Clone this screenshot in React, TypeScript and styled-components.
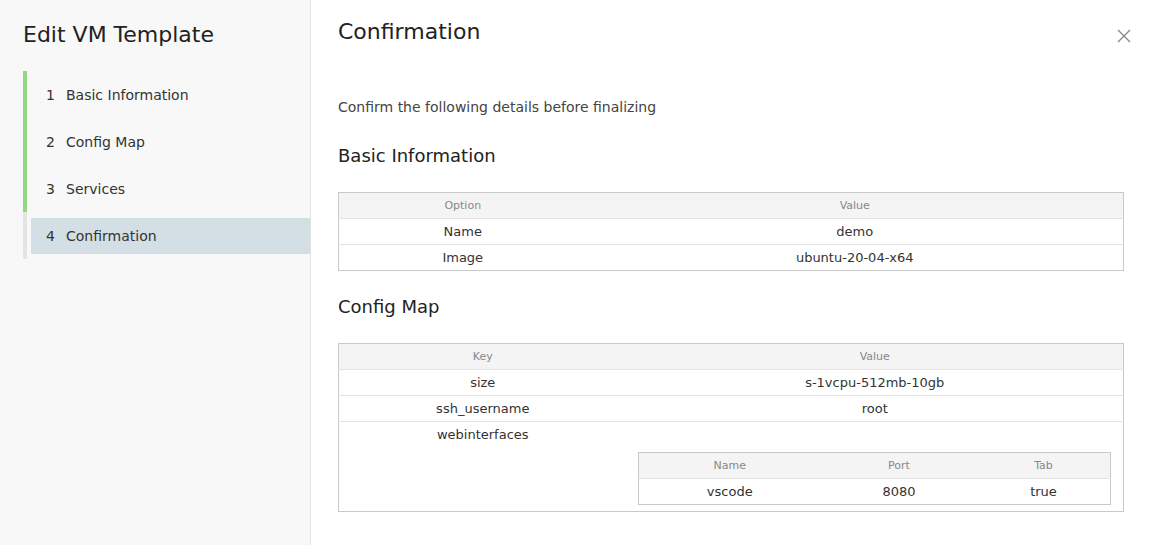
import React from "react";
import styled, { createGlobalStyle } from "styled-components";

const Global = createGlobalStyle`
  html, body { margin: 0; padding: 0; height: 100%; }
  body { font-family: "DejaVu Sans", "Liberation Sans", sans-serif; color: #333; background: #fff; }
  #root { height: 100%; }
  * { box-sizing: border-box; }
`;

const Layout = styled.div`
  display: flex;
  height: 545px;
  width: 1150px;
  overflow: hidden;
`;

const Sidebar = styled.aside`
  width: 311px;
  flex: 0 0 311px;
  background: #f8f8f8;
  border-right: 1px solid #e3e3e3;
  padding: 21px 0 0 23px;
`;

const SideTitle = styled.h1`
  margin: 0;
  font-size: 22px;
  line-height: 28px;
  font-weight: 400;
  color: #222;
`;

const Steps = styled.ol`
  list-style: none;
  margin: 22px 0 0;
  padding: 0;
`;

const Step = styled.li<{ $done: boolean }>`
  height: 47px;
  border-left: 4px solid ${(p) => (p.$done ? "#92d882" : "#e4e4e4")};
  padding: 6px 0 5px 4px;
  display: flex;
`;

const StepLabel = styled.div<{ $active: boolean }>`
  flex: 1;
  display: flex;
  align-items: center;
  padding-left: 15px;
  font-size: 14px;
  color: #333;
  background: ${(p) => (p.$active ? "#d3dee5" : "transparent")};
`;

const StepNum = styled.span`
  width: 20px;
  flex: 0 0 20px;
`;

const Main = styled.main`
  flex: 1;
  padding: 18px 26px 0 27px;
`;

const Header = styled.div`
  display: flex;
  justify-content: space-between;
  align-items: flex-start;
`;

const Title = styled.h2`
  margin: 0;
  font-size: 22px;
  line-height: 28px;
  font-weight: 400;
  color: #222;
`;

const Close = styled.button`
  border: 0;
  background: none;
  padding: 0;
  margin: 11px -7px 0 0;
  width: 14px;
  height: 14px;
  display: flex;
  cursor: pointer;
`;

const Desc = styled.p`
  margin: 51px 0 0;
  font-size: 14px;
  line-height: 20px;
  color: #444;
`;

const Section = styled.h3<{ $top: number }>`
  margin: ${(p) => p.$top}px 0 0;
  font-size: 18px;
  line-height: 24px;
  font-weight: 400;
  color: #222;
`;

const Table = styled.table<{ $top?: number }>`
  width: 100%;
  margin-top: ${(p) => p.$top ?? 0}px;
  border-collapse: collapse;
  border: 1px solid #c9c9c9;
  table-layout: fixed;
`;

const Th = styled.th<{ $w?: number }>`
  ${(p) => (p.$w ? `width: ${p.$w}px;` : "")}
  background: #f4f4f4;
  font-size: 11px;
  font-weight: 400;
  color: #888;
  height: 26px;
  padding: 0;
  text-align: center;
`;

const Tr = styled.tr`
  border-top: 1px solid #e2e2e2;
`;

const Td = styled.td<{ $top?: boolean }>`
  font-size: 13px;
  color: #333;
  height: 25px;
  padding: 0;
  text-align: center;
  vertical-align: ${(p) => (p.$top ? "top" : "middle")};
  line-height: 25px;
`;

const NestedCell = styled.td`
  padding: 30px 12px 6px 11px;
  vertical-align: top;
`;

const CloseIcon = () => (
  <svg width="14" height="14" viewBox="0 0 14 14">
    <path d="M1 1 L13 13 M13 1 L1 13" stroke="#8a8a8a" strokeWidth="1.4" fill="none" />
  </svg>
);

const steps = ["Basic Information", "Config Map", "Services", "Confirmation"];

export default function App() {
  return (
    <>
      <Global />
      <Layout>
        <Sidebar>
          <SideTitle>Edit VM Template</SideTitle>
          <Steps>
            {steps.map((s, i) => (
              <Step key={s} $done={i < 3}>
                <StepLabel $active={i === 3}>
                  <StepNum>{i + 1}</StepNum>
                  {s}
                </StepLabel>
              </Step>
            ))}
          </Steps>
        </Sidebar>
        <Main>
          <Header>
            <Title>Confirmation</Title>
            <Close aria-label="Close">
              <CloseIcon />
            </Close>
          </Header>
          <Desc>Confirm the following details before finalizing</Desc>
          <Section $top={27}>Basic Information</Section>
          <Table $top={24}>
            <thead>
              <tr>
                <Th $w={248}>Option</Th>
                <Th>Value</Th>
              </tr>
            </thead>
            <tbody>
              <Tr>
                <Td>Name</Td>
                <Td>demo</Td>
              </Tr>
              <Tr>
                <Td>Image</Td>
                <Td>ubuntu-20-04-x64</Td>
              </Tr>
            </tbody>
          </Table>
          <Section $top={24}>Config Map</Section>
          <Table $top={24}>
            <thead>
              <tr>
                <Th $w={288}>Key</Th>
                <Th>Value</Th>
              </tr>
            </thead>
            <tbody>
              <Tr>
                <Td>size</Td>
                <Td>s-1vcpu-512mb-10gb</Td>
              </Tr>
              <Tr>
                <Td>ssh_username</Td>
                <Td>root</Td>
              </Tr>
              <Tr>
                <Td $top>webinterfaces</Td>
                <NestedCell>
                  <Table>
                    <thead>
                      <tr>
                        <Th $w={183}>Name</Th>
                        <Th $w={156}>Port</Th>
                        <Th>Tab</Th>
                      </tr>
                    </thead>
                    <tbody>
                      <Tr>
                        <Td>vscode</Td>
                        <Td>8080</Td>
                        <Td>true</Td>
                      </Tr>
                    </tbody>
                  </Table>
                </NestedCell>
              </Tr>
            </tbody>
          </Table>
        </Main>
      </Layout>
    </>
  );
}
